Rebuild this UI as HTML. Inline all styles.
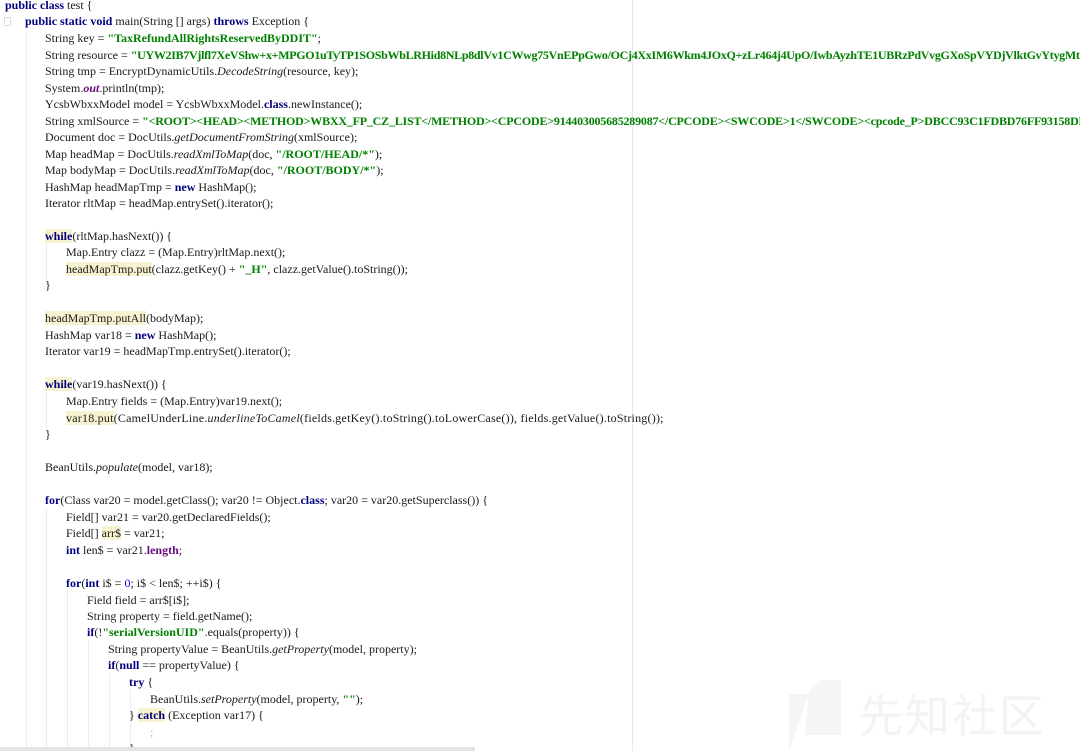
<!DOCTYPE html>
<html><head><meta charset="utf-8"><style>
html,body{margin:0;padding:0;background:#fff;width:1080px;height:751px;overflow:hidden;position:relative}
.l{position:absolute;white-space:pre;font-family:"Liberation Serif","Noto Serif CJK SC",serif;font-size:12px;line-height:16px;color:#1a1a1a;height:16px;max-width:1200px;overflow:hidden}
.k{color:#000080;font-weight:bold}
.s{color:#008000;font-weight:bold}
.i{font-style:italic}
.f{color:#660e7a;font-weight:bold}
.h{background:#f7f2cf}
.g{position:absolute;top:0;width:1px;background:#ececec}
.w{position:absolute;left:0;top:0;width:1080px;height:751px;overflow:hidden}
</style></head><body><div class="w">
<div class="g" style="left:632px;height:751px;background:#e8e8e8"></div>
<div class="g" style="left:26px;top:28px;height:723px"></div>
<div class="g" style="left:46px;top:244px;height:40px"></div>
<div class="g" style="left:46px;top:392px;height:40px"></div>
<div class="g" style="left:46px;top:508px;height:243px"></div>
<div class="g" style="left:67px;top:590px;height:161px"></div>
<div class="g" style="left:88px;top:640px;height:111px"></div>
<div class="g" style="left:109px;top:673px;height:78px"></div>
<div class="g" style="left:130px;top:690px;height:61px"></div>
<div style="position:absolute;left:4px;top:17px;width:5px;height:7px;border:1px solid #ddd;border-radius:1px"></div>

<div class="l" style="left:5px;top:-3px"><span class="k">public class</span> test {</div>
<div class="l" style="left:25px;top:13px"><span class="k">public static void</span> main(String [] args) <span class="k">throws</span> Exception {</div>
<div class="l" style="left:45px;top:30px">String key = <span class="s">"TaxRefundAllRightsReservedByDDIT"</span>;</div>
<div class="l" style="left:45px;top:47px">String resource = <span class="s" style="letter-spacing:-0.3px">"UYW2IB7Vjlfl7XeVShw+x+MPGO1uTyTP1SOSbWbLRHid8NLp8dlVv1CWwg75VnEPpGwo/OCj4XxIM6Wkm4JOxQ+zLr464j4UpO/IwbAyzhTE1UBRzPdVvgGXoSpVYDjVlktGvYtygMtidlwECiyfXBKPZv</span></div>
<div class="l" style="left:45px;top:63px">String tmp = EncryptDynamicUtils.<span class="i">DecodeString</span>(resource, key);</div>
<div class="l" style="left:45px;top:80px">System.<span class="f i">out</span>.println(tmp);</div>
<div class="l" style="left:45px;top:96px">YcsbWbxxModel model = YcsbWbxxModel.<span class="k">class</span>.newInstance();</div>
<div class="l" style="left:45px;top:113px">String xmlSource = <span class="s" style="letter-spacing:-0.2px">"&lt;ROOT&gt;&lt;HEAD&gt;&lt;METHOD&gt;WBXX_FP_CZ_LIST&lt;/METHOD&gt;&lt;CPCODE&gt;914403005685289087&lt;/CPCODE&gt;&lt;SWCODE&gt;1&lt;/SWCODE&gt;&lt;cpcode_P&gt;DBCC93C1FDBD76FF93158DBAE326B66C5280D11DF040EE</span></div>
<div class="l" style="left:45px;top:129px">Document doc = DocUtils.<span class="i">getDocumentFromString</span>(xmlSource);</div>
<div class="l" style="left:45px;top:146px">Map headMap = DocUtils.<span class="i">readXmlToMap</span>(doc, <span class="s">"/ROOT/HEAD/*"</span>);</div>
<div class="l" style="left:45px;top:162px">Map bodyMap = DocUtils.<span class="i">readXmlToMap</span>(doc, <span class="s">"/ROOT/BODY/*"</span>);</div>
<div class="l" style="left:45px;top:179px">HashMap headMapTmp = <span class="k">new</span> HashMap();</div>
<div class="l" style="left:45px;top:195px">Iterator rltMap = headMap.entrySet().iterator();</div>
<div class="l" style="left:45px;top:228px"><span class="k h">while</span>(rltMap.hasNext()) {</div>
<div class="l" style="left:66px;top:244px">Map.Entry clazz = (Map.Entry)rltMap.next();</div>
<div class="l" style="left:66px;top:261px"><span class="h">headMapTmp.put</span>(clazz.getKey() + <span class="s">"_H"</span>, clazz.getValue().toString());</div>
<div class="l" style="left:45px;top:277px">}</div>
<div class="l" style="left:45px;top:310px"><span class="h">headMapTmp.putAll</span>(bodyMap);</div>
<div class="l" style="left:45px;top:327px">HashMap var18 = <span class="k">new</span> HashMap();</div>
<div class="l" style="left:45px;top:343px">Iterator var19 = headMapTmp.entrySet().iterator();</div>
<div class="l" style="left:45px;top:376px"><span class="k h">while</span>(var19.hasNext()) {</div>
<div class="l" style="left:66px;top:393px">Map.Entry fields = (Map.Entry)var19.next();</div>
<div class="l" style="left:66px;top:410px;letter-spacing:0.22px"><span class="h">var18.put</span>(CamelUnderLine.<span class="i">underlineToCamel</span>(fields.getKey().toString().toLowerCase()), fields.getValue().toString());</div>
<div class="l" style="left:45px;top:426px">}</div>
<div class="l" style="left:45px;top:459px">BeanUtils.<span class="i">populate</span>(model, var18);</div>
<div class="l" style="left:45px;top:492px"><span class="k">for</span>(Class var20 = model.getClass(); var20 != Object.<span class="k">class</span>; var20 = var20.getSuperclass()) {</div>
<div class="l" style="left:66px;top:509px">Field[] var21 = var20.getDeclaredFields();</div>
<div class="l" style="left:66px;top:525px">Field[] <span class="h">arr$</span> = var21;</div>
<div class="l" style="left:66px;top:542px"><span class="k">int</span> len$ = var21.<span class="f">length</span>;</div>
<div class="l" style="left:66px;top:575px"><span class="k">for</span>(<span class="k">int</span> i$ = <span style="color:#0000ff">0</span>; i$ &lt; len$; ++i$) {</div>
<div class="l" style="left:87px;top:592px">Field field = arr$[i$];</div>
<div class="l" style="left:87px;top:608px">String property = field.getName();</div>
<div class="l" style="left:87px;top:624px"><span class="k">if</span>(!<span class="s">"serialVersionUID"</span>.equals(property)) {</div>
<div class="l" style="left:108px;top:641px">String propertyValue = BeanUtils.<span class="i">getProperty</span>(model, property);</div>
<div class="l" style="left:108px;top:657px"><span class="k">if</span>(<span class="k">null</span> == propertyValue) {</div>
<div class="l" style="left:129px;top:674px"><span class="k">try</span> {</div>
<div class="l" style="left:150px;top:691px">BeanUtils.<span class="i">setProperty</span>(model, property, <span class="s">""</span>);</div>
<div class="l" style="left:129px;top:707px">} <span class="k h">catch</span> (Exception var17) {</div>
<div class="l" style="left:150px;top:724px;color:#bbb">;</div>
<div class="l" style="left:129px;top:740px">}</div>

<svg style="position:absolute;left:789px;top:680px" width="60" height="71"><polygon points="20,10 52,-20 52,55 16,55" fill="#f5f5f5"/><polygon points="0,14 20,14 0,71" fill="#f5f5f5"/></svg>
<div style="position:absolute;left:858px;top:686px;font-family:'Noto Sans CJK SC',sans-serif;font-size:45px;line-height:54px;color:#f3f3f3;letter-spacing:2px">先知社区</div>
<div style="position:absolute;left:0;top:747px;width:475px;height:4px;background:#e4e4e4"></div>
</div></body></html>
